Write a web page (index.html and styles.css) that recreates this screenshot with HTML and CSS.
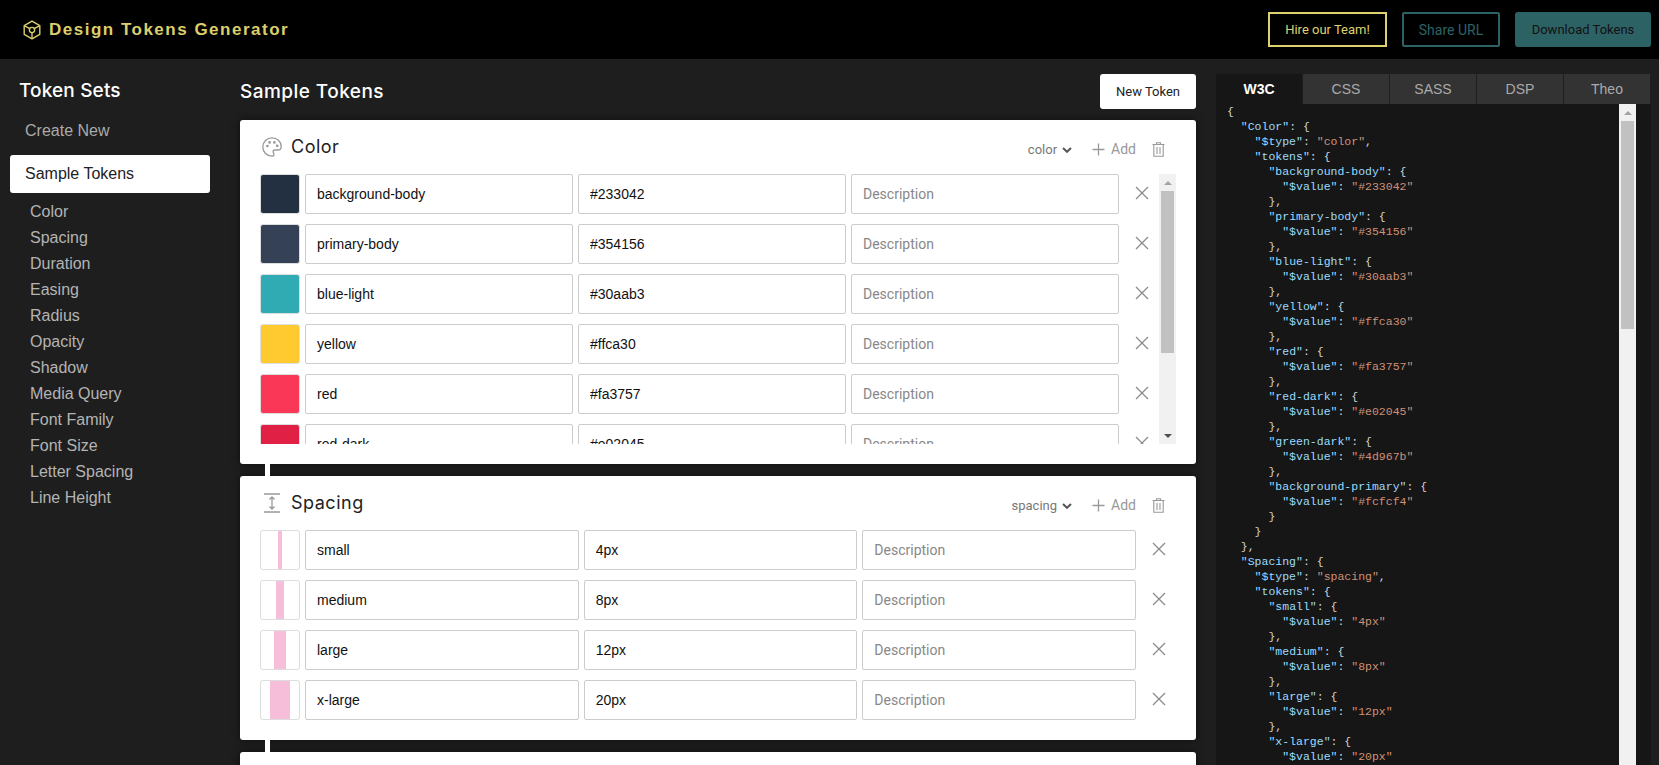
FILE: index.html
```html
<!DOCTYPE html>
<html lang="en">
<head>
<meta charset="utf-8">
<title>Design Tokens Generator</title>
<link rel="stylesheet" href="styles.css">
</head>
<body>
<header class="topbar">
  <div class="brand">
    <svg class="brand-icon" viewBox="0 0 20 20" width="20" height="20" fill="none" stroke="#dccf6b" stroke-width="1.4" stroke-linejoin="round"><path d="M10 1.2 17.8 5.6V14.4L10 18.8 2.2 14.4V5.6Z"/><circle cx="10" cy="10" r="2.6"/><path d="M7.8 8.7 2.6 5.8M12.2 8.7 17.4 5.8M10 12.6V18.4"/></svg>
    <span class="brand-name">Design Tokens Generator</span>
  </div>
  <div class="top-actions">
    <button class="btn btn-hire">Hire our Team!</button>
    <button class="btn btn-share">Share URL</button>
    <button class="btn btn-download">Download Tokens</button>
  </div>
</header>
<div class="app">
  <nav class="sidebar">
    <h2 class="side-title">Token Sets</h2>
    <a class="side-link">Create New</a>
    <a class="side-link side-active">Sample Tokens</a>
    <ul class="side-sub">
      <li>Color</li><li>Spacing</li><li>Duration</li><li>Easing</li><li>Radius</li><li>Opacity</li><li>Shadow</li><li>Media Query</li><li>Font Family</li><li>Font Size</li><li>Letter Spacing</li><li>Line Height</li>
    </ul>
  </nav>
  <main class="main">
    <div class="main-head">
      <h1 class="main-title">Sample Tokens</h1>
      <button class="btn-new">New Token</button>
    </div>
    <section class="card">
      <div class="card-head">
        <svg class="card-icon" viewBox="0 0 20 20" width="20" height="20" fill="none" stroke="#999" stroke-width="1.3" stroke-linecap="round" stroke-linejoin="round"><path d="M10 .8C4.900.8.800 4.900.800 10s4.100 9.200 9.200 9.200c1.300 0 2-.800 2-1.800 0-1.200-.900-1.600-.900-2.600 0-1.100.900-1.800 2-1.800h2.600c1.900 0 3.500-1.300 3.500-3.600C19.200 4.500 15.100.8 10 .8Z"/><circle cx="5.400" cy="9" r=".7" fill="#999"/><circle cx="7.600" cy="5.400" r=".7" fill="#999"/><circle cx="12.400" cy="5.400" r=".7" fill="#999"/><circle cx="15.200" cy="8.800" r=".7" fill="#999"/></svg>
        <h3 class="card-title">Color</h3>
        <div class="card-tools">
          <span class="type">color<svg class="chev" viewBox="0 0 10 6" width="10" height="6" fill="none" stroke="#555" stroke-width="2"><path d="M1 1l4 3.800L9 1"/></svg></span>
          <span class="add"><svg viewBox="0 0 13 13" width="13" height="13" stroke="#999" stroke-width="1.300"><path d="M6.500.500v12M.500 6.500h12"/></svg>Add</span>
          <svg class="trash" viewBox="0 0 13 15" width="13" height="15" fill="none" stroke="#999" stroke-width="1.100"><path d="M.5 2.500h12M4.500 2.500V.8h4v1.700M1.800 2.500V14.300h9.400V2.500M5 5v7M8 5v7"/></svg>
        </div>
      </div>
      <div class="list-frame">
        <div class="rows rows-clip">
          <div class="row"><span class="swatch swatch-body"></span><input class="field" value="background-body"><input class="field" value="#233042"><input class="field" placeholder="Description"><span class="remove"><svg viewBox="0 0 14 14" width="14" height="14" stroke="#888" stroke-width="1.200"><path d="M1 1l12 12M13 1 1 13"/></svg></span></div>
          <div class="row"><span class="swatch swatch-primary"></span><input class="field" value="primary-body"><input class="field" value="#354156"><input class="field" placeholder="Description"><span class="remove"><svg viewBox="0 0 14 14" width="14" height="14" stroke="#888" stroke-width="1.200"><path d="M1 1l12 12M13 1 1 13"/></svg></span></div>
          <div class="row"><span class="swatch swatch-blue"></span><input class="field" value="blue-light"><input class="field" value="#30aab3"><input class="field" placeholder="Description"><span class="remove"><svg viewBox="0 0 14 14" width="14" height="14" stroke="#888" stroke-width="1.200"><path d="M1 1l12 12M13 1 1 13"/></svg></span></div>
          <div class="row"><span class="swatch swatch-yellow"></span><input class="field" value="yellow"><input class="field" value="#ffca30"><input class="field" placeholder="Description"><span class="remove"><svg viewBox="0 0 14 14" width="14" height="14" stroke="#888" stroke-width="1.200"><path d="M1 1l12 12M13 1 1 13"/></svg></span></div>
          <div class="row"><span class="swatch swatch-red"></span><input class="field" value="red"><input class="field" value="#fa3757"><input class="field" placeholder="Description"><span class="remove"><svg viewBox="0 0 14 14" width="14" height="14" stroke="#888" stroke-width="1.200"><path d="M1 1l12 12M13 1 1 13"/></svg></span></div>
          <div class="row"><span class="swatch swatch-reddark"></span><input class="field" value="red-dark"><input class="field" value="#e02045"><input class="field" placeholder="Description"><span class="remove"><svg viewBox="0 0 14 14" width="14" height="14" stroke="#888" stroke-width="1.200"><path d="M1 1l12 12M13 1 1 13"/></svg></span></div>
        </div>
        <div class="sb">
          <span class="sb-up"></span>
          <span class="sb-thumb sb-thumb-list"></span>
          <span class="sb-down"></span>
        </div>
      </div>
    </section>
    <section class="card">
      <div class="card-head">
        <svg class="card-icon" viewBox="0 0 20 20" width="20" height="20" fill="none" stroke="#999" stroke-width="1.300"><path d="M2 1h16M2 19h16" stroke-width="1.500"/><path d="M10 4v12M7.500 6.500 10 4l2.500 2.500M7.500 13.500 10 16l2.500-2.500"/></svg>
        <h3 class="card-title">Spacing</h3>
        <div class="card-tools">
          <span class="type">spacing<svg class="chev" viewBox="0 0 10 6" width="10" height="6" fill="none" stroke="#555" stroke-width="2"><path d="M1 1l4 3.800L9 1"/></svg></span>
          <span class="add"><svg viewBox="0 0 13 13" width="13" height="13" stroke="#999" stroke-width="1.300"><path d="M6.500.500v12M.500 6.500h12"/></svg>Add</span>
          <svg class="trash" viewBox="0 0 13 15" width="13" height="15" fill="none" stroke="#999" stroke-width="1.100"><path d="M.5 2.500h12M4.500 2.500V.8h4v1.700M1.800 2.500V14.300h9.400V2.500M5 5v7M8 5v7"/></svg>
        </div>
      </div>
      <div class="rows">
        <div class="row"><span class="swatch swatch-space"><i class="bar bar-4"></i></span><input class="field" value="small"><input class="field" value="4px"><input class="field" placeholder="Description"><span class="remove"><svg viewBox="0 0 14 14" width="14" height="14" stroke="#888" stroke-width="1.200"><path d="M1 1l12 12M13 1 1 13"/></svg></span></div>
        <div class="row"><span class="swatch swatch-space"><i class="bar bar-8"></i></span><input class="field" value="medium"><input class="field" value="8px"><input class="field" placeholder="Description"><span class="remove"><svg viewBox="0 0 14 14" width="14" height="14" stroke="#888" stroke-width="1.200"><path d="M1 1l12 12M13 1 1 13"/></svg></span></div>
        <div class="row"><span class="swatch swatch-space"><i class="bar bar-12"></i></span><input class="field" value="large"><input class="field" value="12px"><input class="field" placeholder="Description"><span class="remove"><svg viewBox="0 0 14 14" width="14" height="14" stroke="#888" stroke-width="1.200"><path d="M1 1l12 12M13 1 1 13"/></svg></span></div>
        <div class="row"><span class="swatch swatch-space"><i class="bar bar-20"></i></span><input class="field" value="x-large"><input class="field" value="20px"><input class="field" placeholder="Description"><span class="remove"><svg viewBox="0 0 14 14" width="14" height="14" stroke="#888" stroke-width="1.200"><path d="M1 1l12 12M13 1 1 13"/></svg></span></div>
      </div>
    </section>
    <section class="card card-last"></section>
  </main>
  <aside class="output">
    <div class="tabs">
      <span class="tab tab-active">W3C</span><span class="tab">CSS</span><span class="tab">SASS</span><span class="tab">DSP</span><span class="tab">Theo</span>
    </div>
    <div class="code-wrap">
<pre class="code">{
  <b>"Color"</b>: {
    <b>"$type"</b>: <em>"color"</em>,
    <b>"tokens"</b>: {
      <b>"background-body"</b>: {
        <b>"$value"</b>: <em>"#233042"</em>
      },
      <b>"primary-body"</b>: {
        <b>"$value"</b>: <em>"#354156"</em>
      },
      <b>"blue-light"</b>: {
        <b>"$value"</b>: <em>"#30aab3"</em>
      },
      <b>"yellow"</b>: {
        <b>"$value"</b>: <em>"#ffca30"</em>
      },
      <b>"red"</b>: {
        <b>"$value"</b>: <em>"#fa3757"</em>
      },
      <b>"red-dark"</b>: {
        <b>"$value"</b>: <em>"#e02045"</em>
      },
      <b>"green-dark"</b>: {
        <b>"$value"</b>: <em>"#4d967b"</em>
      },
      <b>"background-primary"</b>: {
        <b>"$value"</b>: <em>"#fcfcf4"</em>
      }
    }
  },
  <b>"Spacing"</b>: {
    <b>"$type"</b>: <em>"spacing"</em>,
    <b>"tokens"</b>: {
      <b>"small"</b>: {
        <b>"$value"</b>: <em>"4px"</em>
      },
      <b>"medium"</b>: {
        <b>"$value"</b>: <em>"8px"</em>
      },
      <b>"large"</b>: {
        <b>"$value"</b>: <em>"12px"</em>
      },
      <b>"x-large"</b>: {
        <b>"$value"</b>: <em>"20px"</em></pre>
      <div class="sb sb-code">
        <span class="sb-up"></span>
        <span class="sb-thumb sb-thumb-code"></span>
      </div>
    </div>
  </aside>
</div>
</body>
</html>
```
FILE: styles.css
```css
* { box-sizing: border-box; }
html, body { margin: 0; height: 100%; overflow: hidden; }
body { background: #1e1e1e; font-family: "Liberation Sans", Arial, sans-serif; color: #222; }

.topbar { height: 59px; background: #000; display: flex; align-items: center; justify-content: space-between; padding: 0 8px 0 22px; }
.brand { display: flex; align-items: center; gap: 7px; }
.brand-icon { display: block; }
.brand-name { font-weight: 700; font-size: 17px; letter-spacing: 1.5px; color: #dccf6b; }
.top-actions { display: flex; gap: 15px; align-items: center; }
.btn { height: 35px; font-family: Roboto, sans-serif; font-size: 13px; padding: 0; background: transparent; }
.btn-hire { width: 119px; border: 2px solid #dfd26e; color: #dfd26e; }
.btn-share { width: 98px; border: 2px solid #2d6265; border-radius: 2px; color: #2d6265; font-size: 14px; }
.btn-download { width: 136px; border: 0; border-radius: 3px; background: #2d6265; color: #111; }

.app { display: flex; height: calc(100vh - 59px); overflow: hidden; }

.sidebar { width: 240px; flex: none; padding: 15px 30px 0 10px; }
.side-title { margin: 1px 0 0 9px; font: 500 19px/32px Inter, sans-serif; letter-spacing: .15px; color: #fff; }
.side-link { display: block; height: 38px; line-height: 38px; padding-left: 15px; font-size: 16px; color: #aaa; margin-top: 5px; }
.side-active { background: #fff; color: #222; border-radius: 3px; margin-top: 5px; }
.side-sub { list-style: none; margin: 6px 0 0; padding: 0 0 0 20px; }
.side-sub li { height: 26px; line-height: 26px; font-size: 16px; color: #b4b4b4; }

.main { width: 956px; flex: none; padding-top: 15px; display: flex; flex-direction: column; gap: 12px; }
.main-head { display: flex; justify-content: space-between; align-items: center; height: 35px; margin-bottom: -1px; }
.main-title { margin: 0; font: 500 19px/32px Inter, sans-serif; letter-spacing: .45px; color: #fff; }
.btn-new { width: 96px; height: 35px; border: 0; border-radius: 3px; background: #fff; font-family: Roboto, sans-serif; font-size: 13px; color: #222; padding: 0; }

.card { position: relative; flex: none; background: #fff; border-radius: 3px; padding: 0 20px 20px; box-shadow: 0 0 8px rgba(0,0,0,.55); }
.card + .card::before { content: ""; position: absolute; left: 25px; top: -12px; width: 5px; height: 12px; background: #fff; }
.card-last { height: 264px; }
.card-head { height: 54px; display: flex; align-items: center; padding: 0 2px; }
.card-icon { display: block; flex: none; }
.card-title { margin: 0 0 0 9px; font: 400 18px/24px Inter, sans-serif; letter-spacing: .5px; color: #222; }
.card-tools { margin-left: auto; display: flex; align-items: center; padding: 4px 9px 0 0; font-family: Roboto, sans-serif; font-size: 14px; }
.type { display: flex; align-items: center; gap: 5px; color: #777; font-size: 13px; }
.chev { display: block; margin-top: 1px; }
.add { display: flex; align-items: center; gap: 6px; margin-left: 20px; color: #999; }
.add svg { display: block; }
.trash { display: block; margin-left: 16px; }

.list-frame { display: flex; height: 270px; }
.rows { display: flex; flex-direction: column; gap: 10px; }
.rows-clip { flex: 1 1 0; min-width: 0; height: 270px; overflow: hidden; }
.row { display: flex; gap: 5px; flex: none; height: 40px; }
.swatch { flex: none; width: 40px; height: 40px; border: 1px solid #ddd; border-radius: 3px; }
.swatch-body { background: #233042; }
.swatch-primary { background: #354156; }
.swatch-blue { background: #30aab3; }
.swatch-yellow { background: #ffca30; }
.swatch-red { background: #fa3757; }
.swatch-reddark { background: #e02045; }
.swatch-space { display: flex; justify-content: center; background: #fff; }
.bar { display: block; height: 100%; background: #f6bed9; }
.bar-4 { width: 4px; }
.bar-8 { width: 8px; }
.bar-12 { width: 12px; }
.bar-20 { width: 20px; }
.field { flex: 1 1 0; min-width: 0; height: 40px; border: 1px solid #ccc; border-radius: 2px; padding: 0 11px; font-family: "Liberation Sans", Arial, sans-serif; font-size: 14px; color: #111; background: #fff; outline: 0; }
.field::placeholder { color: #888; font-family: Roboto, sans-serif; opacity: 1; }
.remove { flex: none; width: 35px; display: flex; align-items: center; justify-content: center; padding: 0 0 3px 1px; }

.sb { flex: none; width: 17px; display: flex; flex-direction: column; background: #f1f1f1; }
.sb-up, .sb-down { flex: none; height: 17px; display: flex; align-items: center; justify-content: center; }
.sb-up::before { content: ""; border: solid transparent; border-width: 0 4px 4px; border-bottom-color: #a3a3a3; }
.sb-down { margin-top: auto; }
.sb-down::before { content: ""; border: solid transparent; border-width: 4px 4px 0; border-top-color: #505050; }
.sb-thumb { flex: none; margin: 0 2px; background: #c1c1c1; }
.sb-thumb-list { height: 162px; }
.sb-thumb-code { height: 208px; }

.output { width: 435px; flex: none; margin: 15px 0 0 20px; }
.tabs { display: flex; gap: 1px; height: 30px; padding-right: 1px; }
.tab { flex: 1 1 0; background: #333; color: #aaa; font-size: 14px; line-height: 30px; text-align: center; }
.tab-active { background: #161616; color: #fff; font-weight: 700; }
.code-wrap { display: flex; background: #161616; padding-right: 15px; height: 800px; }
.code { flex: 1 1 0; min-width: 0; margin: 0; overflow: hidden; padding: 0 0 0 11px; font-family: "Liberation Mono", monospace; font-size: 11.5px; line-height: 15px; color: #d4d4d4; }
.code b { font-weight: 400; color: #9cdcfe; }
.code em { font-style: normal; color: #ce9178; }
```
